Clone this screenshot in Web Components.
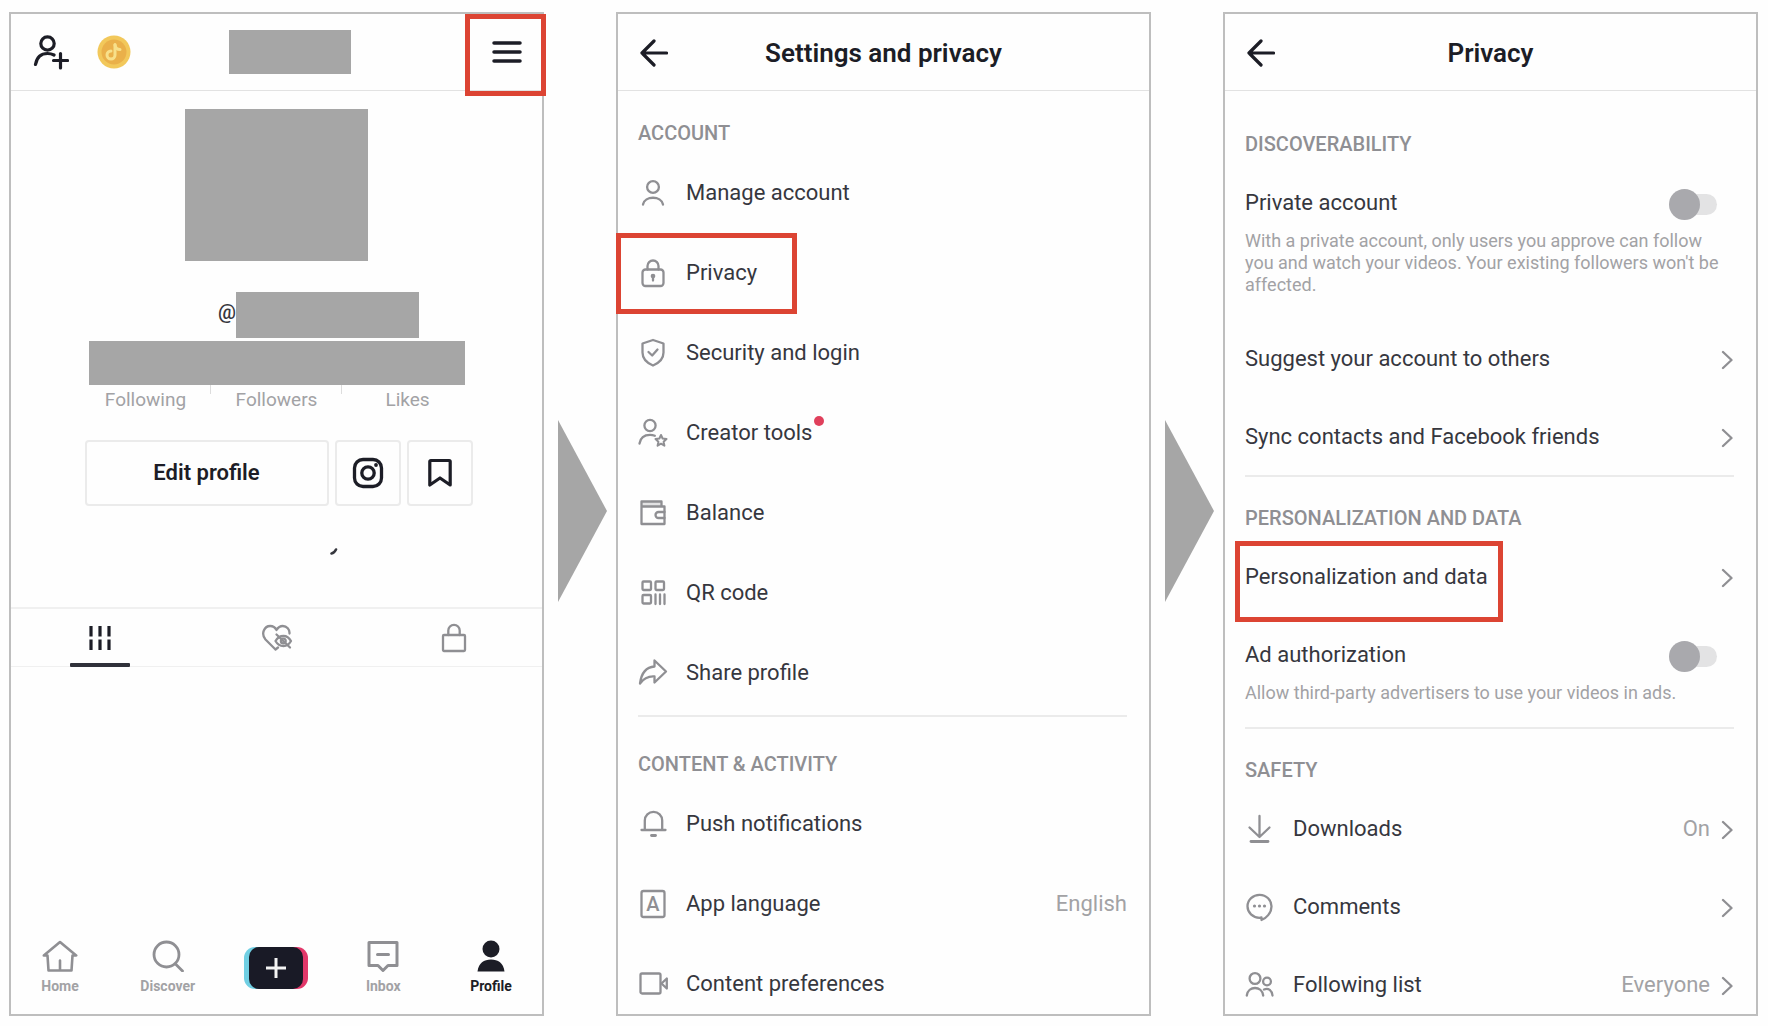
<!DOCTYPE html>
<html lang="en">
<head>
<meta charset="utf-8">
<meta name="viewport" content="width=device-width, initial-scale=1">
<title>Personalization and data walkthrough</title>
<style>
  html { background: #fefefe; }
  body {
    margin: 0;
    font-family: Roboto, "Liberation Sans", sans-serif;
    font-size: 22px;
    color: #36373e;
    --ink: #1c1d26;
    --muted: #8f8f93;
    --soft: #a2a2a5;
    --block: #a6a6a6;
    --frame: #bebebe;
    --rule: #ebebeb;
    --mark: #dc4433;
  }
</style>
</head>
<body>
<guide-flow>
  <phone-screen>
    <profile-header slot="header"></profile-header>
    <profile-card></profile-card>
    <profile-tabs></profile-tabs>
    <bottom-nav></bottom-nav>
  </phone-screen>
  <step-arrow></step-arrow>
  <phone-screen class="settings">
    <title-bar slot="header">Settings and privacy</title-bar>
    <settings-group heading="ACCOUNT">
      <settings-row icon="user">Manage account</settings-row>
      <settings-row icon="lock" class="marked">Privacy</settings-row>
      <settings-row icon="shield">Security and login</settings-row>
      <settings-row icon="creator" dot>Creator tools</settings-row>
      <settings-row icon="wallet">Balance</settings-row>
      <settings-row icon="qr">QR code</settings-row>
      <settings-row icon="share">Share profile</settings-row>
    </settings-group>
    <settings-group heading="CONTENT &amp; ACTIVITY">
      <settings-row icon="bell">Push notifications</settings-row>
      <settings-row icon="language" value="English">App language</settings-row>
      <settings-row icon="camera">Content preferences</settings-row>
    </settings-group>
  </phone-screen>
  <step-arrow></step-arrow>
  <phone-screen class="privacy">
    <title-bar slot="header">Privacy</title-bar>
    <settings-group heading="DISCOVERABILITY">
      <toggle-row note="With a private account, only users you approve can follow you and watch your videos. Your existing followers won't be affected.">Private account</toggle-row>
      <settings-row chevron>Suggest your account to others</settings-row>
      <settings-row chevron>Sync contacts and Facebook friends</settings-row>
    </settings-group>
    <settings-group heading="PERSONALIZATION AND DATA">
      <settings-row chevron class="marked">Personalization and data</settings-row>
      <toggle-row note="Allow third-party advertisers to use your videos in ads.">Ad authorization</toggle-row>
    </settings-group>
    <settings-group heading="SAFETY">
      <settings-row icon="download" value="On" chevron>Downloads</settings-row>
      <settings-row icon="comment" chevron>Comments</settings-row>
      <settings-row icon="friends" value="Everyone" chevron>Following list</settings-row>
    </settings-group>
  </phone-screen>
</guide-flow>

<script>
const ICONS = {
  back: [28, 28, '<g stroke-width="3.2"><path d="M2 14H26.5M14 2L2 14l12 12"/></g>'],
  addUser: [36, 36, '<g stroke-width="3.2"><circle cx="14.5" cy="9.5" r="6.7"/><path d="M2.5 30.500C4 22 9 19.500 14.500 19.500c2.500 0 4.500.5 6.500 1.500M27.500 19.500V34M20.500 26.500H34.500"/></g>'],
  coin: [34, 34, '<g stroke="none"><circle cx="17" cy="17" r="16.500" fill="#f2c85b"/><circle cx="17" cy="17" r="12.500" fill="#eab04a"/></g><g stroke="#f8e08a" stroke-width="3"><path d="M18 9.500V20a4 4 0 1 1-4-4"/><path d="M18 10c.5 3 2.500 4.500 5 4.500"/></g>'],
  menu: [30, 24, '<g stroke-width="3.500"><path d="M2 3H28M2 12H28M2 21H28"/></g>'],
  user: [30, 30, '<circle cx="15" cy="9" r="5.900"/><path d="M5 26.500C6.500 17.500 23.500 17.500 25 26.500"/>'],
  lock: [30, 30, '<rect x="4.500" y="11.500" width="21" height="16.500" rx="3"/><path d="M9.500 11.500V8a5.500 5.500 0 0 1 11 0v3.500M15 18.500v4"/><circle cx="15" cy="18" r="1.200" fill="currentColor"/>'],
  shield: [30, 30, '<path d="M15 2L25.500 5.500V14.500C25.500 20.500 21 25 15 27.500C9 25 4.500 20.500 4.500 14.500V5.500Z"/><path d="M10.500 14l3.700 3.500 5.300-6"/>'],
  creator: [30, 30, '<circle cx="12" cy="7.500" r="5.600"/><path d="M1.500 25.500C2.500 19 7 16.800 12 16.800c2 0 3.500.4 4.800 1"/><path stroke-width="2" d="M23 17l1.600 3.500 3.900.5-2.900 2.700.8 4-3.400-2-3.400 2 .8-4-2.900-2.700 3.900-.5z"/>'],
  wallet: [30, 30, '<path d="M3.500 8.500H26.500V26H3.500V3.500H23.500V8.500"/><path d="M26.500 14H20.500a3 3 0 0 0 0 6h6"/><path stroke="none" fill="currentColor" opacity=".25" d="M3.500 3.500h20v5h-20z"/>'],
  qr: [30, 30, '<rect x="4.500" y="3.500" width="8.500" height="8.500" rx="1"/><rect x="17.500" y="3.500" width="8.500" height="8.500" rx="1"/><rect x="4.500" y="17" width="8.500" height="8.500" rx="1"/><path d="M17.500 16.500v9.500M22 16.500v9.500M26.500 16.500v9.500"/>'],
  share: [30, 30, '<path d="M16.500 2.500L28 13.500 16.500 24.500V18.500C10 18 6 20 2 25.500C3.500 14 9 9 16.500 8.500Z"/>'],
  bell: [30, 30, '<path d="M3.500 21H27.500M6.800 21V11.500a8.700 8.700 0 0 1 17.400 0V21"/><path d="M13.500 26.500h4" stroke-width="2.800"/>'],
  language: [30, 30, '<rect x="3.500" y="2" width="23" height="26" rx="2"/><text x="15" y="22" text-anchor="middle" font-size="20" font-weight="500" stroke="none" fill="currentColor">A</text>'],
  camera: [30, 30, '<rect x="2.500" y="4.500" width="20" height="20" rx="1.500"/><path d="M28.800 9.500v10l-5.300-5z"/>'],
  download: [30, 30, '<path d="M14.500 2V22.500M4.500 13.500L14.500 23l10-9.500"/><path d="M6 27.500H23" stroke-width="2.800"/>'],
  comment: [30, 30, '<path d="M16.500 25.300V28C21 26.500 26.500 21 26.500 14.500a12 11.500 0 1 0-12 11.300z"/><g stroke="none" fill="currentColor"><circle cx="9.500" cy="14" r="1.600"/><circle cx="14.500" cy="14" r="1.600"/><circle cx="19.500" cy="14" r="1.600"/></g>'],
  friends: [30, 30, '<circle cx="10" cy="8.500" r="5.400"/><circle cx="22" cy="11.500" r="3.900"/><path d="M1.800 25.500C3 15.500 17 15.500 18.200 25.500M19 19.500C23.500 17.500 27 20.500 27.500 25.500"/>'],
  chevron: [12, 20, '<path d="M2 2l8.500 8L2 18"/>'],
  instagram: [32, 32, '<g stroke-width="3.300"><rect x="2.500" y="2.500" width="27" height="27" rx="8.500"/><circle cx="16" cy="16" r="6.200"/></g><circle cx="24" cy="8" r="1.900" fill="currentColor" stroke="none"/>'],
  bookmark: [26, 30, '<path stroke-width="3.200" d="M2.800 3.500a1 1 0 0 1 1-1H22.200a1 1 0 0 1 1 1V27L13 20 2.800 27z"/>'],
  speck: [8, 8, '<path stroke-width="2.600" d="M1.500 5.500C4 5 5 3.500 6 1.500"/>'],
  bars: [24, 26, '<path stroke-width="3.200" stroke-linecap="butt" d="M3 1v10.500M12 1v10.500M21 1v10.500M3 14.500v10.500M12 14.500v10.500M21 14.500v10.500"/>'],
  heartHidden: [32, 28, '<path d="M14.500 25.500L4.500 15.500C-.5 9.500 3.500 2 9.200 2c3 0 5 1.500 6.300 4C17 3.500 19 2 21.800 2c4 0 7 3.500 6.700 7.500M14.500 25.500l2.500-2"/><path d="M14.500 17c2-3.500 5-5 8-5s5.500 1.500 7.500 5c-2 3.500-4.500 5-7.500 5s-6-1.500-8-5z"/><circle cx="22.300" cy="17" r="2.400"/><path d="M15.500 10.500L29 23.500"/>'],
  tabLock: [26, 30, '<rect x="2" y="12" width="22" height="16" rx="1"/><path d="M7.300 12V7.500a5.700 5.700 0 0 1 11.400 0V12"/>'],
  home: [36, 32, '<path stroke-width="2.600" d="M5.500 15.500H1.800L18 2 34.200 15.500H30.500L29.500 30.500H6.500zM18 20.500v10"/>'],
  search: [34, 32, '<g stroke-width="2.800"><circle cx="15.500" cy="14.500" r="12.500"/><path d="M24.500 24l7 7"/></g>'],
  inbox: [32, 32, '<path stroke-width="3" d="M2 2.500H30V25.500H21L16 30.500 11 25.500H2zM10.500 14.500h11"/>'],
  person: [30, 32, '<g stroke="none" fill="currentColor"><circle cx="15" cy="9" r="8.500"/><path d="M1.500 31.500C2.500 23 8 19.500 15 19.500S27.500 23 28.500 31.500z"/></g>'],
  create: [66, 44, '<g stroke="none"><rect x="1" y="1" width="54" height="42" rx="11" fill="#70cfe3"/><rect x="11" y="1" width="54" height="42" rx="11" fill="#e2386a"/><rect x="6" y="1" width="54" height="42" rx="10" fill="#191a26"/></g><path stroke="#f4f4f4" stroke-width="3" stroke-linecap="butt" d="M23 22H43M33 12V32"/>']
};

const define = (name, html, setup) => customElements.define(name, class extends HTMLElement {
  constructor() {
    super();
    const t = document.createElement('template');
    t.innerHTML = html;
    this.attachShadow({ mode: 'open' }).append(t.content.cloneNode(true));
  }
  connectedCallback() { if (setup) setup(this, this.shadowRoot); }
});

define('app-icon', `<style>
  :host { display: inline-flex; flex: none; }
  svg { display: block; fill: none; stroke: currentColor; stroke-width: 2.3; stroke-linecap: round; stroke-linejoin: round; }
</style>`, (el, root) => {
  if (root.querySelector('svg')) return;
  const [w, h, body] = ICONS[el.getAttribute('name')];
  root.innerHTML += `<svg width="${w}" height="${h}" viewBox="0 0 ${w} ${h}" aria-hidden="true">${body}</svg>`;
});

define('guide-flow', `<style>
  :host {
    display: grid;
    grid-template-columns: minmax(0, 1fr) 72px minmax(0, 1fr) 72px minmax(0, 1fr);
    min-height: 100vh; box-sizing: border-box; padding: 12px 10px 10px 9px;
  }
</style><slot></slot>`);

define('step-arrow', `<style>
  :host { display: flex; align-items: center; padding: 0 0 6px 14px; }
  div { width: 49px; height: 182px; background: var(--block); clip-path: polygon(0 0, 100% 50%, 0 100%); }
</style><div></div>`);

define('phone-screen', `<style>
  :host { display: flex; flex-direction: column; box-sizing: border-box; border: 2px solid var(--frame); background: #fefefe; min-width: 0; }
  :host(.settings) { --row-gap: 26px; --first-top: 30px; --head-gap: 20px; --rule-top: 15px; --rule-bottom: 35px; --mark-box: -13px auto -14px -22px; --mark-width: 181px; }
  :host(.privacy) { --row-gap: 24px; --first-top: 41px; --head-gap: 19px; --rule-top: 11px; --rule-bottom: 29px; --mark-box: -9px auto -18px -10px; --mark-width: 268px; }
  header { height: 76px; border-bottom: 1px solid #e2e2e2; }
  main { flex: 1; display: flex; flex-direction: column; }
</style><header><slot name="header"></slot></header><main><slot></slot></main>`);

define('title-bar', `<style>
  :host { display: grid; grid-template-columns: 1fr auto 1fr; align-items: center; box-sizing: border-box; height: 100%; padding: 2px 22px 0; color: var(--ink); }
  button { all: unset; display: flex; justify-self: start; cursor: pointer; }
  h1 { margin: 0; font-size: 26px; line-height: 32px; font-weight: 600; }
</style><button type="button" aria-label="Back"><app-icon name="back"></app-icon></button><h1><slot></slot></h1>`);

define('settings-group', `<style>
  :host { display: block; padding: 0 22px 0 20px; }
  :host(:first-of-type) { padding-top: var(--first-top); }
  :host(:not(:first-of-type))::before { content: ""; display: block; height: 2px; background: var(--rule); margin: var(--rule-top) 0 var(--rule-bottom); }
  h2 { margin: 0 0 var(--head-gap); font-size: 20px; line-height: 25px; font-weight: 500; color: var(--muted); }
  div { display: flex; flex-direction: column; gap: var(--row-gap); }
</style><h2></h2><div><slot></slot></div>`, (el, root) => {
  root.querySelector('h2').textContent = el.getAttribute('heading');
});

define('settings-row', `<style>
  :host { display: block; position: relative; }
  a { display: flex; align-items: center; height: 54px; color: inherit; text-decoration: none; line-height: 28px; }
  .lead { color: var(--muted); margin-right: 18px; }
  .text { position: relative; }
  .value { margin-left: auto; color: var(--soft); }
  .go { color: var(--muted); margin-left: auto; padding: 2px 1px 0 0; }
  .value + .go { margin-left: 11px; }
  .dot { position: absolute; left: 100%; top: -3px; margin-left: 2px; width: 10px; height: 10px; border-radius: 50%; background: #e0405c; }
  :host(.marked)::after { content: ""; position: absolute; inset: var(--mark-box); width: var(--mark-width); box-sizing: border-box; border: 5px solid var(--mark); pointer-events: none; }
</style><a href="#"></a>`, (el, root) => {
  const icon = el.getAttribute('icon'), value = el.getAttribute('value');
  root.querySelector('a').innerHTML =
    (icon ? `<app-icon class="lead" name="${icon}"></app-icon>` : '') +
    `<span class="text"><slot></slot>${el.hasAttribute('dot') ? '<i class="dot"></i>' : ''}</span>` +
    (value ? `<span class="value">${value}</span>` : '') +
    (el.hasAttribute('chevron') ? '<app-icon class="go" name="chevron"></app-icon>' : '');
});

define('toggle-row', `<style>
  :host { display: block; padding-bottom: 12px; }
  div { display: flex; align-items: center; justify-content: space-between; height: 54px; padding-right: 17px; line-height: 28px; }
  input { appearance: none; margin: 0; display: grid; align-items: center; width: 48px; height: 32px; padding-top: 2px; cursor: pointer; }
  input::before, input::after { content: ""; grid-area: 1 / 1; }
  input::before { height: 21px; margin-left: 6px; border-radius: 11px; background: #e3e3e4; }
  input::after { width: 31px; height: 31px; border-radius: 50%; background: #a9a9ad; }
  input:checked::after { justify-self: end; }
  p { margin: 0; padding-right: 8px; font-size: 18px; line-height: 22px; color: var(--soft); }
</style><div><label for="t"><slot></slot></label><input id="t" type="checkbox" role="switch" aria-describedby="n"></div><p id="n"></p>`, (el, root) => {
  root.querySelector('p').textContent = el.getAttribute('note');
});

define('profile-header', `<style>
  :host { display: flex; align-items: center; height: 100%; padding: 0 20px 0 22px; color: var(--ink); }
  button { all: unset; display: flex; cursor: pointer; }
  .coin { margin-left: 28px; }
  .name { width: 122px; height: 44px; margin: 0 auto 0 98px; background: var(--block); }
  .menu { position: relative; }
  .menu::after { content: ""; position: absolute; inset: -26px -24px -32px -27px; border: 5px solid var(--mark); }
</style>
<button type="button" aria-label="Find friends"><app-icon name="addUser"></app-icon></button>
<button type="button" class="coin" aria-label="Rewards"><app-icon name="coin"></app-icon></button>
<div class="name"></div>
<button type="button" class="menu" aria-label="Menu"><app-icon name="menu"></app-icon></button>`);

define('profile-card', `<style>
  :host { display: flex; flex-direction: column; align-items: center; padding-top: 18px; }
  .avatar { width: 183px; height: 152px; background: var(--block); }
  .handle { display: flex; align-items: flex-start; margin-top: 31px; padding-left: 84px; font-size: 20px; line-height: 40px; font-weight: 500; }
  .handle i { width: 183px; height: 46px; background: var(--block); }
  .counts { width: 376px; height: 44px; margin-top: 3px; background: var(--block); }
  .stats { display: grid; grid-template-columns: repeat(3, 131px); text-align: center; font-size: 19px; line-height: 24px; color: var(--soft); }
  .stats span { padding-top: 3px; background: linear-gradient(#ddd, #ddd) right top / 1px 9px no-repeat; }
  .stats span:last-child { background: none; }
  .actions { display: flex; gap: 6px; margin-top: 28px; padding-left: 4px; color: var(--ink); }
  button { box-sizing: border-box; width: 66px; height: 66px; padding: 0; display: flex; align-items: center; justify-content: center; border: 2px solid var(--rule); border-radius: 4px; background: none; color: inherit; font: 600 22px/28px Roboto, "Liberation Sans", sans-serif; cursor: pointer; }
  .edit { width: 244px; }
  .bio { padding: 42px 0 51px 115px; line-height: 0; }
</style>
<div class="avatar"></div>
<div class="handle">@<i></i></div>
<div class="counts"></div>
<div class="stats"><span>Following</span><span>Followers</span><span>Likes</span></div>
<div class="actions">
  <button type="button" class="edit">Edit profile</button>
  <button type="button" aria-label="Instagram"><app-icon name="instagram"></app-icon></button>
  <button type="button" aria-label="Saved"><app-icon name="bookmark"></app-icon></button>
</div>
<div class="bio"><app-icon name="speck"></app-icon></div>`);

define('profile-tabs', `<style>
  :host { display: grid; grid-template-columns: repeat(3, 1fr); border-top: 2px solid #f0f0f0; border-bottom: 1px solid #f0f0f0; }
  button { all: unset; position: relative; display: flex; align-items: center; justify-content: center; height: 57px; color: var(--muted); cursor: pointer; }
  .on { color: var(--ink); }
  .on::after { content: ""; position: absolute; bottom: -1px; width: 60px; height: 4px; border-radius: 1px; background: #30313a; }
</style>
<button type="button" class="on" aria-label="Videos"><app-icon name="bars"></app-icon></button>
<button type="button" aria-label="Liked"><app-icon name="heartHidden"></app-icon></button>
<button type="button" aria-label="Private"><app-icon name="tabLock"></app-icon></button>`);

define('bottom-nav', `<style>
  :host { display: block; margin-top: auto; }
  nav { display: flex; justify-content: space-between; align-items: center; padding: 0 22px 19px 20px; }
  a { width: 58px; display: flex; flex-direction: column; align-items: center; gap: 5px; font-size: 14px; line-height: 18px; font-weight: 700; color: var(--soft); text-decoration: none; }
  a app-icon { color: var(--muted); }
  .on, .on app-icon { color: var(--ink); }
</style>
<nav>
  <a href="#"><app-icon name="home"></app-icon>Home</a>
  <a href="#"><app-icon name="search"></app-icon>Discover</a>
  <a href="#" aria-label="Create"><app-icon name="create"></app-icon></a>
  <a href="#"><app-icon name="inbox"></app-icon>Inbox</a>
  <a href="#" class="on"><app-icon name="person"></app-icon>Profile</a>
</nav>`);
</script>
</body>
</html>
